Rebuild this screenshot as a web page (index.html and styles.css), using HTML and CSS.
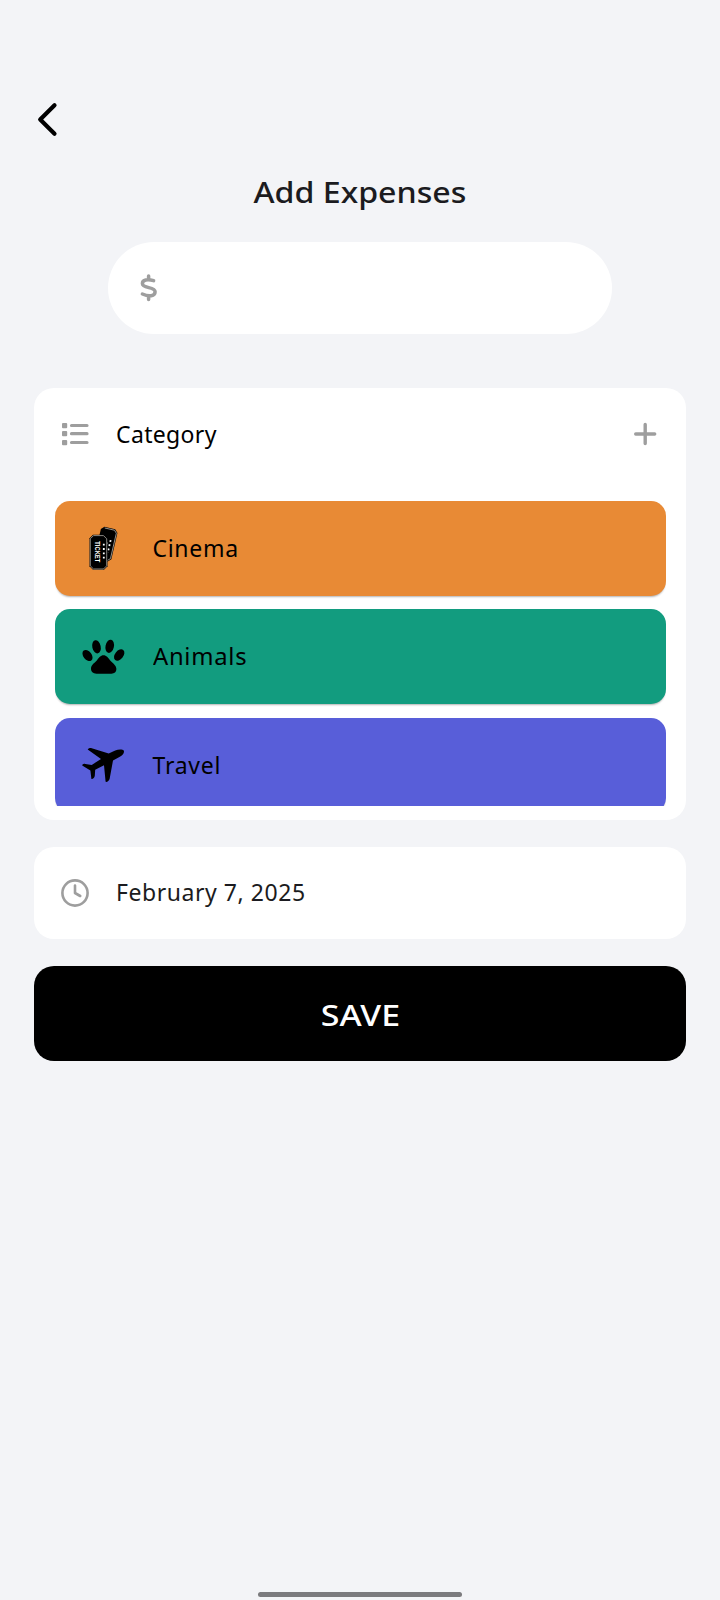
FILE: index.html
```html
<!DOCTYPE html>
<html lang="en">
<head>
<meta charset="utf-8">
<title>Add Expenses</title>
<link rel="stylesheet" href="styles.css">
</head>
<body>
<main class="screen">
  <header class="topbar">
    <svg class="back" width="28" height="40" viewBox="0 0 28 40" aria-label="Back"><path d="M20.500 5.300 6.200 19.500 20.500 33.700"/></svg>
  </header>
  <h1 class="title">Add Expenses</h1>
  <div class="amount">
    <svg class="dollar" width="20" height="32" viewBox="0 0 20 32"><path d="M9.600 4v3.500M9.600 24v3.500M14.600 8.700C8.600 6.800 3.400 7.700 3.400 11.500c0 5.500 12.700 2.700 12.700 8.200 0 4.600-6 5.200-12.700 2.300"/></svg>
  </div>
  <section class="card category">
    <div class="category-head">
      <svg class="list-icon" width="28" height="24" viewBox="0 0 28 24"><rect x="0" y="1" width="5.200" height="5.200" rx="1"/><rect x="0" y="9" width="5.200" height="5.200" rx="1"/><rect x="0" y="18" width="5.200" height="5.200" rx="1"/><path d="M9.500 3.500H25M9.500 11.700H25M9.500 20.500H25"/></svg>
      <span class="label category-label">Category</span>
      <svg class="plus" width="24" height="24" viewBox="0 0 24 24"><path d="M12.200 2.500v19M2.700 12h19"/></svg>
    </div>
    <div class="list">
      <div class="item cinema">
        <svg class="item-icon" width="44" height="44" viewBox="0 0 44 44">
          <g transform="translate(1 .8) rotate(13 26 16)"><path class="ticket" d="M18 1.500h11l3 3v27l-3 3H18l-3-3v-27z"/><path class="ticket-line" d="M18.500 2.500h10l2.500 2.500v26l-2.500 2.500h-10"/><path class="stars" d="M27 13v13M24 16v9"/></g>
          <g transform="translate(1 .8)"><path class="ticket" d="M10 8h11l3.500 3.500v28L21 43H10l-3.500-3.500v-28z"/><path class="ticket-line" d="M10.500 8.800h10l3.200 3.200v27l-3.200 3.200h-10l-3.200-3.200v-27z"/><path class="stars" d="M20.800 17v17"/>
          <text class="ticket-text" transform="translate(12 14.500) rotate(90)" textLength="21" lengthAdjust="spacingAndGlyphs">TICKET</text></g>
        </svg>
        <span class="label cinema-label">Cinema</span>
      </div>
      <div class="item animals">
        <svg class="item-icon" width="44" height="44" viewBox="0 0 44 44"><ellipse cx="5.500" cy="20.500" rx="4.200" ry="6.200" transform="rotate(-38 5.500 20.500)"/><ellipse cx="14.500" cy="11.800" rx="4.200" ry="6.700" transform="rotate(-12 14.500 11.800)"/><ellipse cx="27.700" cy="11.300" rx="4.200" ry="6.700" transform="rotate(12 27.700 11.300)"/><ellipse cx="37.200" cy="20" rx="4.200" ry="6.500" transform="rotate(38 37.200 20)"/><path d="M21.500 20.300c3 0 4.600 2.600 6.300 4.600 2.200 2.700 6.600 5 6.600 9.200 0 3-2 4.600-5 4.600H14.500c-3.500 0-5.500-1.800-5.500-5.100 0-4 4-6 6.200-8.700 1.700-2 3.300-4.600 6.300-4.600z"/></svg>
        <span class="label animals-label">Animals</span>
      </div>
      <div class="item travel">
        <svg class="item-icon" width="44" height="44" viewBox="0 0 44 44"><path d="M5.700 6.600c.8-1.200 2.300-1.800 4-1.300L26.700 10.500l6.500-3c3-1.200 7.300-1.500 8.500.1 1.200 2-1.500 4.800-4.300 6.500L31 17.500l-3.400 18.500c-.6 1.600-2.400 3.300-4 2.800l-1.600-16.500-8.800 4.400-.4 6c-.3 1.600-1.600 3.400-3.400 3.200l-1-8.500L.2 22.500c.2-1.500 1.500-2.300 3.200-1.600l6.300 1L19 16.100z"/></svg>
        <span class="label travel-label">Travel</span>
      </div>
    </div>
  </section>
  <section class="card date">
    <svg class="clock" width="28" height="28" viewBox="0 0 28 28"><circle cx="14" cy="14" r="12.600"/><path d="M14 6.500V14l5.200 3"/></svg>
    <span class="label date-label">February 7, 2025</span>
  </section>
  <button class="save"><span class="save-label">SAVE</span></button>
  <div class="home-bar"></div>
</main>
</body>
</html>
```
FILE: styles.css
```css
* { box-sizing: border-box; }
body {
  margin: 0;
  background: #f3f4f7;
  font-family: "Noto Sans", "Open Sans", sans-serif;
  color: #1b1b20;
}
.screen {
  display: flex;
  flex-direction: column;
  width: 720px;
  height: 1600px;
  padding: 100px 34px 3px;
  overflow: hidden;
}
svg { display: block; flex: none; overflow: visible; }
.topbar { height: 72px; }
.back { fill: none; stroke: #000; stroke-width: 4.2; stroke-linecap: round; stroke-linejoin: round; }
.title {
  height: 40px;
  margin: 0;
  line-height: 40px;
  font-size: 29.5px;
  font-weight: 500;
  text-align: center;
  transform: scaleX(1.09);
}
.amount {
  display: flex;
  align-items: center;
  width: 504px;
  height: 92px;
  margin: 30px auto 0;
  padding-left: 31px;
  border-radius: 46px;
  background: #fff;
}
.dollar { fill: none; stroke: #9e9e9e; stroke-width: 3.5; stroke-linecap: round; stroke-linejoin: round; }
.card { border-radius: 20px; background: #fff; }
.category { height: 432px; margin-top: 54px; padding: 0 20px 14px 21px; }
.category-head { display: flex; align-items: center; height: 112.5px; padding: 0 9px 21px 7px; }
.list-icon { fill: #9e9e9e; }
.list-icon path { stroke: #9e9e9e; stroke-width: 3.2; stroke-linecap: round; }
.plus { margin-left: auto; fill: none; stroke: #9e9e9e; stroke-width: 3.4; stroke-linecap: round; }
.label {
  display: inline-block;
  font-size: 23px;
  font-weight: 450;
  line-height: 32px;
  white-space: nowrap;
  transform-origin: left center;
}
.category-label { margin: 0 0 0 26px; color: #000; letter-spacing: .35px; }
.list { display: flex; flex-direction: column; gap: 13.5px; height: 305.5px; overflow: hidden; }
.item {
  display: flex;
  flex: none;
  align-items: center;
  height: 95px;
  padding-left: 27px;
  border-radius: 15px;
  color: #000;
  box-shadow: 0 2px 2px -1px rgba(0, 0, 0, .3);
}
.item .label { margin-left: 26.5px; }
.cinema-label { letter-spacing: .7px; }
.animals-label { margin-top: -1px; letter-spacing: .7px; transform: scaleX(1.035); }
.travel-label { letter-spacing: .75px; }
.cinema { background: #e88a35; }
.animals { background: #129c7f; }
.travel { background: #585ed9; }
.ticket { fill: #000; }
.ticket-line { fill: none; stroke: #aaa69f; stroke-width: .8; }
.stars { stroke: #fff; stroke-width: 1.8; stroke-dasharray: 1.8 2.5; }
.ticket-text { fill: #fff; font: bold 8px "Liberation Sans", sans-serif; }
.date { display: flex; align-items: center; height: 92px; margin-top: 27px; padding-left: 27px; }
.clock { fill: none; stroke: #9e9e9e; stroke-width: 2.6; stroke-linecap: round; stroke-linejoin: round; }
.date-label { margin: -2px 0 0 27px; letter-spacing: .55px; }
.save {
  height: 95px;
  margin-top: 27px;
  padding: 2px 0 0;
  border: 0;
  border-radius: 20px;
  background: #000;
  color: #fff;
  font: 500 29.5px/40px "Noto Sans", "Open Sans", sans-serif;
}
.save-label { display: inline-block; transform: scaleX(1.15); }
.home-bar { align-self: center; width: 204px; height: 5px; margin-top: auto; border-radius: 3px; background: #7b7b7e; }
```
